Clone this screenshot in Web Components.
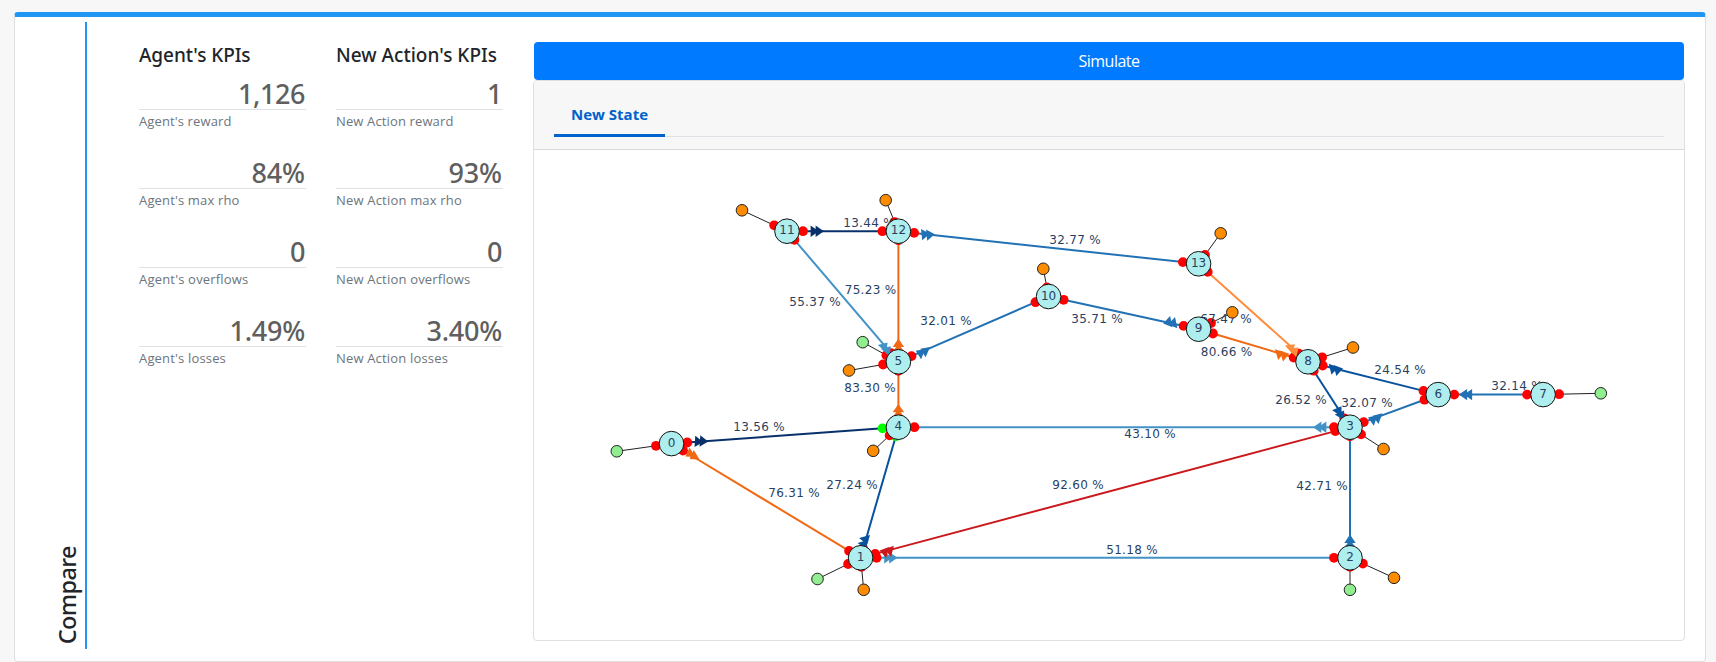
<!DOCTYPE html>
<html lang="en">
<head>
<meta charset="utf-8">
<title>Compare</title>
<style>
html,body{margin:0;height:100%}
body{background:#f7f7f7;font-family:"Open Sans","Noto Sans",sans-serif;color:#212529;overflow:hidden}
</style>
</head>
<body>
<compare-section heading="Compare">
  <kpi-column slot="kpis" heading="Agent's KPIs" w="111.5">
    <kpi-item value="1,126" vw="67" label="Agent's reward" lw="92.5"></kpi-item>
    <kpi-item value="84%" vw="53.5" label="Agent's max rho" lw="100.5"></kpi-item>
    <kpi-item value="0" vw="15" label="Agent's overflows" lw="109.5"></kpi-item>
    <kpi-item value="1.49%" vw="75.5" label="Agent's losses" lw="87"></kpi-item>
  </kpi-column>
  <kpi-column slot="kpis" heading="New Action's KPIs" w="161">
    <kpi-item value="1" vw="15" label="New Action reward" lw="117.5"></kpi-item>
    <kpi-item value="93%" vw="53.5" label="New Action max rho" lw="126"></kpi-item>
    <kpi-item value="0" vw="15" label="New Action overflows" lw="134.5"></kpi-item>
    <kpi-item value="3.40%" vw="75.5" label="New Action losses" lw="112"></kpi-item>
  </kpi-column>
  <simulate-button>Simulate</simulate-button>
  <tab-card tab="New State"><network-graph></network-graph></tab-card>
</compare-section>
<script>
// Adjusts letter spacing so that a line of text takes the given width.
function fit(el, width){
  if(!width) return;
  const r=document.createRange(); r.selectNodeContents(el);
  const w=r.getBoundingClientRect().width, n=el.textContent.length;
  if(w) el.style.letterSpacing=((width-w)/n).toFixed(3)+'px';
}
function root(host, html){
  const s=host.attachShadow({mode:'open'}), t=document.createElement('template');
  t.innerHTML=html; s.appendChild(t.content.cloneNode(true)); return s;
}

customElements.define('compare-section', class extends HTMLElement{
  connectedCallback(){
    root(this, `<style>
:host{display:flex;box-sizing:border-box;margin:12px 10px 0 14px;height:650px;border:1px solid #dfdfdf;border-top:5px solid #2196f3;border-radius:4px;background:#fff;padding:5px 20px 12px 0}
.side{width:70px;border-right:2px solid #2196f3;display:flex;align-items:flex-end;justify-content:flex-end}
h4{margin:0 4px 5px 0;font-weight:500;font-size:23.5px;line-height:28px;writing-mode:vertical-rl;transform:rotate(180deg);letter-spacing:-.6px;font-family:"Noto Sans","Open Sans",sans-serif}
.kpis{display:flex;gap:30px;margin-left:52px;padding-top:20px}
.main{flex:1;margin-left:30px;padding-top:20px;display:flex;flex-direction:column;min-width:0}
</style><div class="side"><h4></h4></div><div class="kpis"><slot name="kpis"></slot></div><div class="main"><slot></slot></div>`)
    .querySelector('h4').textContent=this.getAttribute('heading');
  }
});

customElements.define('kpi-column', class extends HTMLElement{
  connectedCallback(){
    const s=root(this, `<style>
:host{display:block;width:167px}
h5{margin:0 0 8px;font-weight:500;font-size:19px;line-height:26px;height:24px;white-space:nowrap;font-family:"Noto Sans","Open Sans",sans-serif}
</style><h5><span></span></h5><slot></slot>`);
    const h=s.querySelector('span'); h.textContent=this.getAttribute('heading'); fit(h,+this.getAttribute('w'));
  }
});

customElements.define('kpi-item', class extends HTMLElement{
  connectedCallback(){
    const s=root(this, `<style>
:host{display:flex;flex-direction:column;height:79px;white-space:nowrap}
.v{height:35px;border-bottom:1px solid #dee2e6;text-align:right;padding-right:1px;color:#5f5f5f;font-size:27px;font-weight:500;line-height:40px;font-family:"Noto Sans","Open Sans",sans-serif}
.l{font-size:13px;line-height:23px;color:#6c757d}
</style><div class="v"><span></span></div><div class="l"><span></span></div>`);
    const [v,l]=s.querySelectorAll('span');
    v.textContent=this.getAttribute('value'); l.textContent=this.getAttribute('label');
    fit(v,+this.getAttribute('vw')); fit(l,+this.getAttribute('lw'));
  }
});

customElements.define('simulate-button', class extends HTMLElement{
  connectedCallback(){
    root(this, `<style>
:host{display:block;margin:0 1px;height:38px}
button{display:block;width:100%;height:38px;border:0;padding:0;border-radius:4px;background:#007bff;color:#fff;font:16px/38px "Open Sans",sans-serif;letter-spacing:-.5px}
</style><button><slot></slot></button>`);
  }
});

customElements.define('tab-card', class extends HTMLElement{
  connectedCallback(){
    root(this, `<style>
:host{display:block;box-sizing:border-box;height:561px;border:1px solid #dfdfdf;border-radius:4px;overflow:hidden;background:#fff}
.head{height:68px;background:#f7f7f7;border-bottom:1px solid #d9d9d9;display:flex}
.tabs{flex:1;margin:12px 20px;height:43px;border-bottom:1px solid #dee2e6;display:flex}
.tab{box-sizing:border-box;width:111px;height:44px;border-bottom:3px solid #0062cc;border-radius:4px 4px 0 0;color:#0062cc;font-weight:700;font-size:15px;line-height:43px;text-align:center;letter-spacing:0;white-space:nowrap}
</style><div class="head"><div class="tabs"><div class="tab"></div></div></div><slot></slot>`)
    .querySelector('.tab').textContent=this.getAttribute('tab');
  }
});

customElements.define('network-graph', class extends HTMLElement{
  connectedCallback(){
    const N={0:[671.5,443.6],1:[860.6,557.8],2:[1350,557.8],3:[1350,427.2],4:[898.4,427.2],5:[898.4,361.8],6:[1438.2,394.6],7:[1543.1,394.6],8:[1308,361.8],9:[1198.6,329.2],10:[1048.6,296.5],11:[787,231.2],12:[898.4,231.2],13:[1198.6,263.8]};
    // a, b, colour, label, label centre x, label baseline, node that carries the arrow,
    // +1 when the arrow leaves that node
    const E=[
      [0,4,'#08306b','13.56 %',759,431,0,1],
      [0,1,'#f16913','76.31 %',794,497,0,-1],
      [1,2,'#4292c6','51.18 %',1132,554,1,1],
      [1,3,'#cb181d','92.60 %',1078,489,1,-1],
      [4,1,'#08519c','27.24 %',852,489,1,1],
      [3,2,'#2171b5','42.71 %',1322,490,2,1],
      [3,4,'#4292c6','43.10 %',1150,438,3,1],
      [5,4,'#f16913','83.30 %',870,392,4,1],
      [12,5,'#f16913','75.23 %',870.5,294,5,1],
      [11,5,'#4292c6','55.37 %',815,306,5,-1],
      [10,5,'#2171b5','32.01 %',946,325,5,-1],
      [11,12,'#08306b','13.44 %',869,227,11,1],
      [12,13,'#2171b5','32.77 %',1075,244,12,1],
      [10,9,'#2171b5','35.71 %',1097,323,9,1],
      [13,8,'#fd8d3c','67.47 %',1226,323,8,-1],
      [9,8,'#f16913','80.66 %',1226.5,356,8,-1],
      [8,6,'#08519c','24.54 %',1400,374,8,1],
      [8,3,'#08519c','26.52 %',1301,404,3,-1],
      [6,3,'#2171b5','32.07 %',1367,407,3,-1],
      [7,6,'#2171b5','32.14 %',1517,390,6,-1]];
    const O='#ff8c00',G='#90ee90';
    const S=[[0,616.8,451.3,G],[11,742,210.3,O],[12,885.7,200.2,O],[5,862.7,342.2,G],[5,849,370.5,O],[13,1220.7,233.3,O],[10,1043.3,268.8,O],[9,1232.3,312.3,O],[8,1353,347.5,O],[3,1383.5,449,O],[7,1600.8,393.3,G],[2,1394,577.8,O],[2,1350,589.8,G],[4,873.2,450.8,O],[1,817.5,579,G],[1,863.7,589.8,O]];
    const unit=(p,q)=>{const x=q[0]-p[0],y=q[1]-p[1],d=Math.hypot(x,y);return[x/d,y/d]};
    const port=(p,q)=>{const[x,y]=unit(p,q),r=16-7*Math.pow(Math.abs(y),1.5);return[p[0]+x*r,p[1]+y*r,r]};
    const f=n=>n.toFixed(1);
    let lines='',dots='',tips='',labels='',thin='',subs='',nodes='';
    for(const[a,b,c,t,lx,ly,at,dir]of E){
      const p=port(N[a],N[b]),q=port(N[b],N[a]);
      lines+=`<line x1="${f(p[0])}" y1="${f(p[1])}" x2="${f(q[0])}" y2="${f(q[1])}" stroke="${c}" stroke-width="2"/>`;
      for(const s of[p,q]){const green=a===0&&b===4&&s===q||a===4&&b===1&&s===p;
        dots+=`<circle cx="${f(s[0])}" cy="${f(s[1])}" r="4.9" fill="${green?'#0f0':'red'}"/>`;}
      const o=at===a?b:a,[ux,uy]=unit(N[at],N[o]),r=port(N[at],N[o])[2];
      const sx=ux*dir,sy=-uy*dir;
      // vertical lines keep their arrows pointing up
      const[hx,hy]=Math.abs(ux)<.01?[0,-1]:[sx,sy];
      const steep=Math.abs(uy);
      const off=steep>.6?4.8:steep>.5?7.2:(dir>0?11.5:9);
      for(const k of[0,5]){
        const d=r+off+k-(steep>.9&&ux>.1?1:0), cx=N[at][0]+ux*d, cy=N[at][1]+uy*d;
        const P=(l,w)=>f(cx+hx*l-hy*w)+','+f(cy+hy*l+hx*w);
        tips+=`<polygon points="${P(4.4,0)} ${P(-3.9,5.7)} ${P(-3.9,-5.7)}" fill="${c}"/>`;
      }
      labels+=`<text x="${lx-25.8}" y="${ly}" textLength="51.5">${t}</text>`;
    }
    for(const[n,x,y,c]of S){
      const p=port(N[n],[x,y]);
      thin+=`<line x1="${f(p[0])}" y1="${f(p[1])}" x2="${x}" y2="${y}" stroke="#222"/>`;
      dots+=`<circle cx="${f(p[0])}" cy="${f(p[1])}" r="4.9" fill="red"/>`;
      subs+=`<circle cx="${x}" cy="${y}" r="5.8" fill="${c}" stroke="#222"/>`;
    }
    for(const n in N)nodes+=`<circle cx="${N[n][0]}" cy="${N[n][1]}" r="12.3" fill="#afeeee" stroke="#111"/><text x="${N[n][0]}" y="${N[n][1]+3}" text-anchor="middle">${n}</text>`;
    root(this, `<style>
:host{display:block;height:490px}
svg{display:block;width:100%;height:100%}
text{font:12px "DejaVu Sans",sans-serif;fill:#2a3f5f}
</style><svg viewBox="534 150 1150 490">${lines}${thin}${dots}${tips}${labels}${subs}${nodes}</svg>`);
  }
});
</script>
</body>
</html>
